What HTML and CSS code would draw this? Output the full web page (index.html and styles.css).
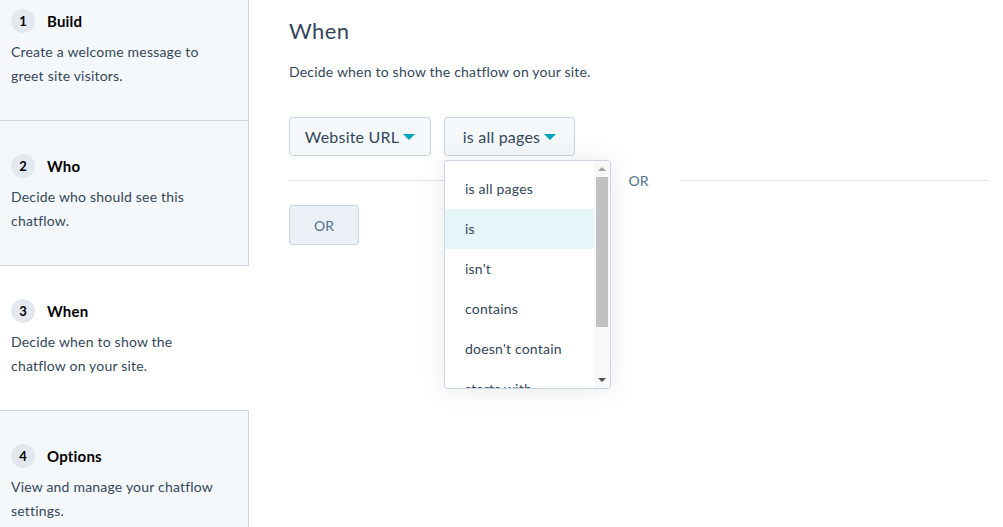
FILE: index.html
```html
<!DOCTYPE html>
<html lang="en">
<head>
    <meta charset="UTF-8">
    <title>Chatflow - When</title>
    <link rel="stylesheet" href="styles.css">
</head>
<body>
    <div class="layout">
        <aside class="steps">
            <div class="step">
                <div class="step-head"><span class="num">1</span><span class="step-title">Build</span></div>
                <p class="step-desc">Create a welcome message to greet site visitors.</p>
            </div>
            <div class="step">
                <div class="step-head"><span class="num">2</span><span class="step-title">Who</span></div>
                <p class="step-desc">Decide who should see this chatflow.</p>
            </div>
            <div class="step active">
                <div class="step-head"><span class="num">3</span><span class="step-title">When</span></div>
                <p class="step-desc">Decide when to show the chatflow on your site.</p>
            </div>
            <div class="step last">
                <div class="step-head"><span class="num">4</span><span class="step-title">Options</span></div>
                <p class="step-desc">View and manage your chatflow settings.</p>
            </div>
        </aside>

        <main class="content">
            <h2 class="title">When</h2>
            <p class="intro">Decide when to show the chatflow on your site.</p>

            <div class="rule-row">
                <button class="select field">Website URL <span class="caret"></span></button>
                <div class="select-wrap">
                    <button class="select operator">is all pages <span class="caret"></span></button>
                    <div class="menu">
                        <ul class="options">
                            <li>is all pages</li>
                            <li class="hover">is</li>
                            <li>isn't</li>
                            <li>contains</li>
                            <li>doesn't contain</li>
                            <li>starts with</li>
                        </ul>
                        <div class="scrollbar">
                            <span class="arrow up"></span>
                            <span class="thumb"></span>
                            <span class="arrow down"></span>
                        </div>
                    </div>
                </div>
            </div>

            <div class="divider"><span>OR</span></div>

            <button class="or-btn">OR</button>
        </main>
    </div>
</body>
</html>
```

FILE: styles.css
```css
body {
    margin: 0;
    font-family: Lato, "Noto Sans", sans-serif;
    color: #33475b;
    background: #fff;
    overflow: hidden;
}
.layout {
    display: flex;
    height: 527px;
    overflow: hidden;
}
.steps {
    width: 249px;
    flex: none;
    margin-top: -24px;
}
.step {
    box-sizing: border-box;
    width: 249px;
    height: 145px;
    padding: 33px 0 0 11px;
    background: #f5f8fa;
    border-right: 1px solid #cbd6e2;
    border-bottom: 1px solid #cbd6e2;
}
.step.active {
    background: #fff;
    border-right-color: #fff;
}
.step.last {
    height: 116px;
    border-bottom: none;
}
.step-head {
    display: flex;
    align-items: center;
    height: 24px;
}
.num {
    width: 24px;
    height: 24px;
    border-radius: 50%;
    background: #e3e8ef;
    color: #000;
    font-size: 13px;
    font-weight: 700;
    display: flex;
    align-items: center;
    justify-content: center;
}
.step-title {
    margin-left: 12px;
    font-size: 15px;
    font-weight: 700;
    color: #000;
    letter-spacing: 0.2px;
}
.step-desc {
    margin: 7px 0 0;
    width: 215px;
    font-size: 14px;
    line-height: 24px;
    color: #33475b;
    letter-spacing: 0.2px;
}
.content {
    flex: 1;
    padding: 0 15px 0 40px;
}
.title {
    margin: 17px 0 0;
    font-size: 22px;
    font-weight: 400;
    line-height: 28px;
    letter-spacing: 0.4px;
}
.intro {
    margin: 18px 0 0;
    font-size: 14px;
    line-height: 18px;
    letter-spacing: 0.2px;
}
.rule-row {
    display: flex;
    gap: 13px;
    margin-top: 36px;
}
.select {
    box-sizing: border-box;
    height: 39px;
    padding: 0;
    background: #f5f8fa;
    border: 1px solid #cbd6e2;
    border-radius: 3px;
    font-family: inherit;
    font-size: 16px;
    letter-spacing: 0.2px;
    color: #33475b;
    display: flex;
    align-items: center;
    justify-content: center;
    gap: 4px;
}
.select.field {
    width: 142px;
}
.select.operator {
    width: 131px;
}
.caret {
    width: 0;
    height: 0;
    border-left: 6px solid transparent;
    border-right: 6px solid transparent;
    border-top: 6px solid #00a4bd;
}
.select-wrap {
    position: relative;
}
.menu {
    position: absolute;
    top: 43px;
    left: 0;
    width: 167px;
    height: 229px;
    box-sizing: border-box;
    background: #fff;
    border: 1px solid #cbd6e2;
    border-radius: 3px;
    box-shadow: 0 1px 24px rgba(45, 62, 80, 0.12);
    display: flex;
    overflow: hidden;
    z-index: 2;
}
.options {
    list-style: none;
    margin: 0;
    padding: 8px 0 0;
    flex: 1;
}
.options li {
    height: 40px;
    line-height: 40px;
    padding-left: 20px;
    font-size: 14px;
    letter-spacing: 0.2px;
}
.options li.hover {
    background: #e5f5f8;
}
.scrollbar {
    width: 16px;
    display: flex;
    flex-direction: column;
    align-items: center;
    background: #f8f8f8;
}
.arrow {
    width: 0;
    height: 0;
    border-left: 4px solid transparent;
    border-right: 4px solid transparent;
}
.arrow.up {
    margin-top: 6px;
    border-bottom: 4px solid #a3a3a3;
}
.arrow.down {
    margin-top: auto;
    margin-bottom: 6px;
    border-top: 4px solid #505050;
}
.thumb {
    width: 12px;
    height: 150px;
    margin-top: 6px;
    background: #c1c1c1;
}
.divider {
    display: flex;
    align-items: center;
    margin-top: 15px;
    height: 18px;
    font-size: 14px;
    color: #516f90;
}
.divider::before,
.divider::after {
    content: "";
    flex: 1;
    border-top: 1px solid #dfe3eb;
}
.divider span {
    padding: 0 31px;
}
.or-btn {
    margin-top: 16px;
    width: 70px;
    height: 40px;
    background: #eaf0f6;
    border: 1px solid #cbd6e2;
    border-radius: 3px;
    font-family: inherit;
    font-size: 14px;
    color: #506e91;
}
```
